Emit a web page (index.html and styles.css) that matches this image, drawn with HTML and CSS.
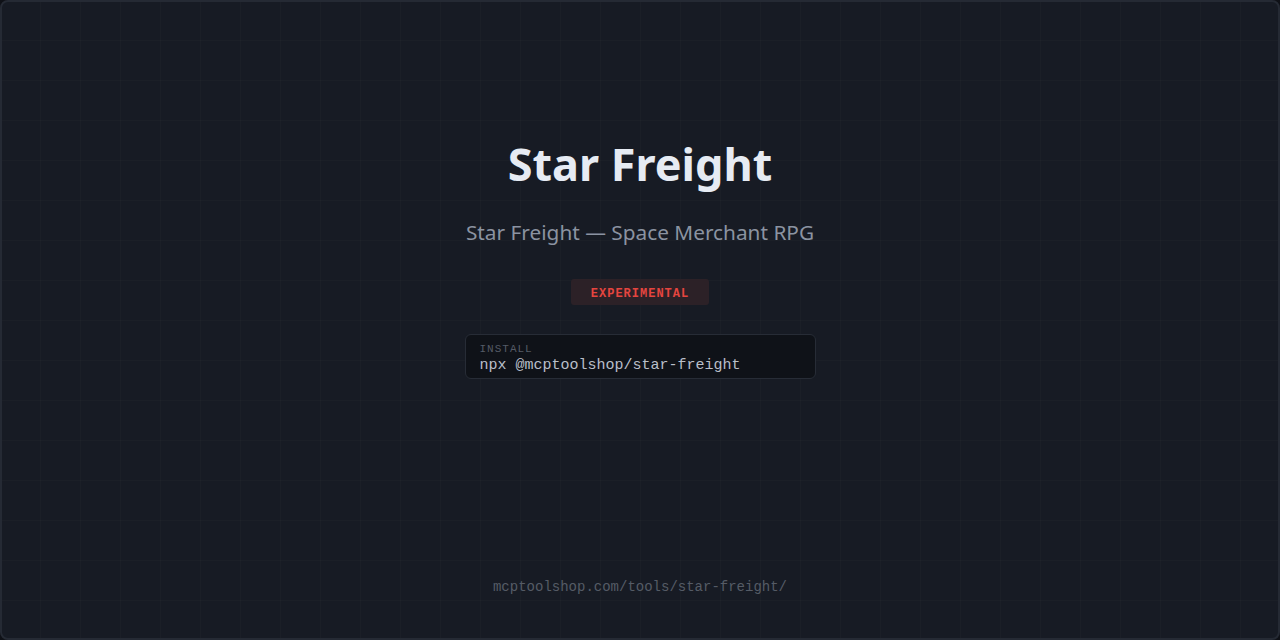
FILE: index.html
```html
<!DOCTYPE html>
<html lang="en">
<head>
<meta charset="utf-8">
<title>Star Freight</title>
<link rel="stylesheet" href="styles.css">
</head>
<body>
<div class="page">
  <main class="hero">
    <h1 class="title">Star Freight</h1>
    <p class="subtitle">Star Freight — Space Merchant RPG</p>
    <span class="badge">EXPERIMENTAL</span>
    <div class="install">
      <div class="install-label">INSTALL</div>
      <div class="install-cmd">npx @mcptoolshop/star-freight</div>
    </div>
  </main>
  <footer class="footer">mcptoolshop.com/tools/star-freight/</footer>
</div>
</body>
</html>
```

FILE: styles.css
```css
* { box-sizing: border-box; }
html, body {
  margin: 0;
  padding: 0;
  background: #0f1117;
}
.page {
  width: 1280px;
  height: 640px;
  border: 2px solid #252a34;
  border-radius: 8px;
  background-color: #171b24;
  background-image:
    linear-gradient(to right, rgba(255,255,255,0.014) 1px, transparent 1px),
    linear-gradient(to bottom, rgba(255,255,255,0.014) 1px, transparent 1px);
  background-size: 40px 40px;
  background-position: -2px -2px;
  display: flex;
  flex-direction: column;
  align-items: center;
  font-family: "Noto Sans", "Open Sans", sans-serif;
  overflow: hidden;
}
.hero {
  display: flex;
  flex-direction: column;
  align-items: center;
  padding-top: 131px;
}
.title {
  margin: 0;
  font-size: 45px;
  font-weight: 700;
  line-height: 62px;
  color: #e6ebf3;
}
.subtitle {
  margin: 23px 0 0;
  font-size: 20.8px;
  line-height: 28px;
  color: #8b93a1;
}
.badge {
  margin-top: 33px;
  padding: 0 20px;
  height: 26px;
  line-height: 30px;
  background: #2c2127;
  border-radius: 3px;
  color: #e5453f;
  font-family: "Liberation Mono", monospace;
  font-weight: 700;
  font-size: 12px;
  letter-spacing: 1px;
}
.install {
  margin-top: 29px;
  width: 351px;
  height: 45px;
  padding: 8px 14px 0;
  background: #0f1218;
  border: 1px solid #272c36;
  border-radius: 6px;
  font-family: "Liberation Mono", monospace;
}
.install-label {
  font-size: 11px;
  line-height: 13px;
  letter-spacing: 1px;
  color: #555b66;
}
.install-cmd {
  font-size: 15px;
  line-height: 19px;
  color: #b9bfc9;
}
.footer {
  margin-top: auto;
  margin-bottom: 43px;
  font-family: "Liberation Mono", monospace;
  font-size: 14px;
  line-height: 16px;
  color: #555b66;
}
```
